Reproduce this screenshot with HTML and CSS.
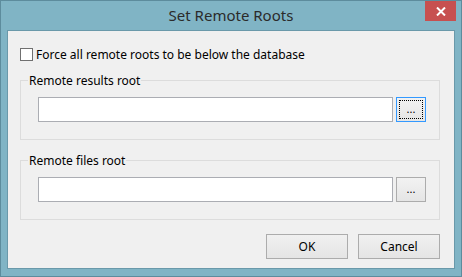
FILE: index.html
```html
<!DOCTYPE html>
<html lang="en">
<head>
    <meta charset="UTF-8">
    <title>Set Remote Roots</title>
    <link rel="stylesheet" href="styles.css">
</head>
<body>
    <div class="window">
        <div class="titlebar">
            <span class="title">Set Remote Roots</span>
            <button class="close" type="button" aria-label="Close">
                <svg width="10" height="9" viewBox="0 0 10 9">
                    <path d="M1 0.5 L9 8.5 M9 0.5 L1 8.5" stroke="#fff" stroke-width="2"/>
                </svg>
            </button>
        </div>
        <div class="client">
            <label class="check">
                <span class="box"></span>
                Force all remote roots to be below the database
            </label>

            <fieldset class="group">
                <legend>Remote results root</legend>
                <div class="row">
                    <input class="path" type="text">
                    <button class="browse focused" type="button"><span>...</span></button>
                </div>
            </fieldset>

            <fieldset class="group second">
                <legend>Remote files root</legend>
                <div class="row">
                    <input class="path" type="text">
                    <button class="browse" type="button"><span>...</span></button>
                </div>
            </fieldset>

            <div class="actions">
                <button class="btn" type="button">OK</button>
                <button class="btn" type="button">Cancel</button>
            </div>
        </div>
    </div>
</body>
</html>
```

FILE: styles.css
```css
body {
    margin: 0;
    padding: 0;
    font-family: "Noto Sans", "Open Sans", Arial, sans-serif;
    font-size: 12px;
    color: #000;
    background-color: #fff;
}
.window {
    position: relative;
    width: 462px;
    height: 277px;
    box-sizing: border-box;
    border: 1px solid #5d8c9d;
    background-color: #80b4c5;
    display: flex;
    flex-direction: column;
}
.titlebar {
    height: 29px;
    display: flex;
    align-items: center;
    justify-content: center;
}
.title {
    font-size: 15px;
    color: #2b2b2b;
    margin-top: -2px;
}
.close {
    position: absolute;
    top: 0;
    right: 5px;
    width: 31px;
    height: 20px;
    border: none;
    padding: 0;
    background-color: #c75050;
    display: flex;
    align-items: center;
    justify-content: center;
}
.client {
    flex: 1;
    margin: 0 6px 7px 6px;
    border: 1px solid #6a99aa;
    background-color: #f0f0f0;
    padding: 17px 14px 0 12px;
}
.check {
    display: flex;
    align-items: center;
    gap: 3px;
    height: 13px;
}
.box {
    width: 11px;
    height: 11px;
    border: 1px solid #707070;
    background-color: #fff;
}
.group {
    margin: 11px 0 0 0;
    padding: 8px 13px 17px 17px;
    border: 1px solid #dcdcdc;
}
.group legend {
    padding: 0 1px;
    margin-left: -10px;
    color: #000;
}
.group.second {
    margin-top: 12px;
}
.row {
    display: flex;
    gap: 3px;
}
.path {
    flex: 1;
    height: 25px;
    box-sizing: border-box;
    border: 1px solid #abadb3;
    background-color: #fff;
    margin: 0;
    padding: 0 3px;
    font: inherit;
}
.browse {
    width: 30px;
    height: 25px;
    box-sizing: border-box;
    border: 1px solid #acacac;
    background: linear-gradient(#f2f2f2, #e5e5e5);
    padding: 0;
    font: inherit;
    font-size: 11px;
    color: #000;
    display: flex;
    align-items: center;
    justify-content: center;
}
.browse span {
    line-height: 1;
    margin-top: -2px;
}
.browse.focused {
    border-color: #3399ff;
    outline: 1px dotted #000;
    outline-offset: -4px;
}
.actions {
    display: flex;
    justify-content: flex-end;
    gap: 10px;
    margin-top: 14px;
}
.btn {
    width: 82px;
    height: 25px;
    box-sizing: border-box;
    border: 1px solid #acacac;
    background: linear-gradient(#f0f0f0, #e5e5e5);
    padding: 0;
    font: inherit;
    color: #000;
}
```
